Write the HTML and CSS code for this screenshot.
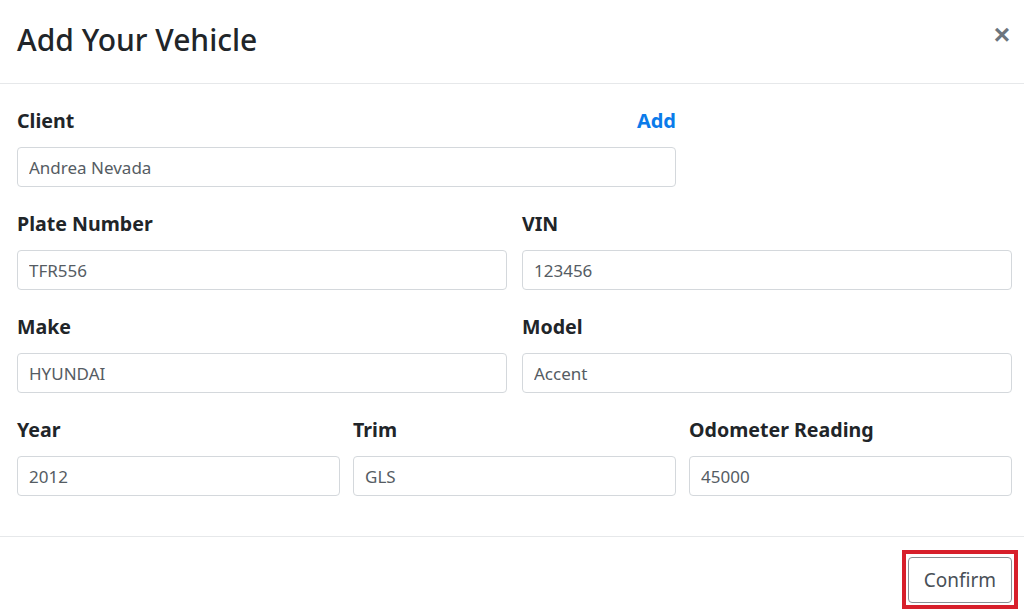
FILE: index.html
```html
<!DOCTYPE html>
<html>
<head>
    <title>Add Your Vehicle</title>
    <link rel="stylesheet" href="styles.css">
</head>
<body>
    <div class="modal">
        <div class="modal-header">
            <h1 class="modal-title">Add Your Vehicle</h1>
            <button class="close" type="button">&times;</button>
        </div>
        <form class="modal-body">
            <div class="row cols-3">
                <div class="field span-2">
                    <div class="label-line">
                        <label>Client</label>
                        <a class="add-link" href="#">Add</a>
                    </div>
                    <input type="text" value="Andrea Nevada">
                </div>
            </div>
            <div class="row cols-2">
                <div class="field">
                    <label>Plate Number</label>
                    <input type="text" value="TFR556">
                </div>
                <div class="field">
                    <label>VIN</label>
                    <input type="text" value="123456">
                </div>
            </div>
            <div class="row cols-2">
                <div class="field">
                    <label>Make</label>
                    <input type="text" value="HYUNDAI">
                </div>
                <div class="field">
                    <label>Model</label>
                    <input type="text" value="Accent">
                </div>
            </div>
            <div class="row cols-3">
                <div class="field">
                    <label>Year</label>
                    <input type="text" value="2012">
                </div>
                <div class="field">
                    <label>Trim</label>
                    <input type="text" value="GLS">
                </div>
                <div class="field">
                    <label>Odometer Reading</label>
                    <input type="text" value="45000">
                </div>
            </div>
        </form>
        <div class="modal-footer">
            <span class="highlight">
                <button class="btn-confirm" type="button">Confirm</button>
            </span>
        </div>
    </div>
</body>
</html>
```

FILE: styles.css
```css
body {
    margin: 0;
    font-family: "Noto Sans", "Open Sans", sans-serif;
    color: #212529;
    background: #fff;
}

.modal {
    width: 1024px;
}

.modal-header {
    display: flex;
    justify-content: space-between;
    align-items: center;
    height: 84px;
    padding: 0 14px 0 17px;
    border-bottom: 1px solid #e6e8ea;
    box-sizing: border-box;
}

.modal-title {
    margin: 0 0 4px 0;
    font-size: 30px;
    font-weight: 500;
    color: #212529;
}

.close {
    margin-top: -14px;
    background: none;
    border: none;
    font-family: "Liberation Sans", sans-serif;
    font-size: 28px;
    font-weight: bold;
    color: #6c757d;
    padding: 0;
    cursor: pointer;
}

.modal-body {
    padding: 25px 12px 15px 17px;
}

.row {
    display: grid;
    margin-bottom: 25px;
}

.cols-2 {
    grid-template-columns: 1fr 1fr;
    column-gap: 15px;
}

.cols-3 {
    grid-template-columns: 1fr 1fr 1fr;
    column-gap: 13px;
}

.span-2 {
    grid-column: span 2;
}

.label-line {
    display: flex;
    justify-content: space-between;
}

label {
    display: block;
    font-size: 19.6px;
    font-weight: bold;
    line-height: 24px;
    margin-bottom: 14px;
}

.add-link {
    font-size: 20px;
    font-weight: bold;
    line-height: 24px;
    color: #0b7bea;
    text-decoration: none;
}

input[type="text"] {
    display: block;
    width: 100%;
    height: 40px;
    box-sizing: border-box;
    padding: 0 11px;
    border: 1px solid #d4d8dc;
    border-radius: 4px;
    font-family: inherit;
    font-size: 17px;
    color: #555c63;
}

.modal-footer {
    display: flex;
    justify-content: flex-end;
    border-top: 1px solid #e6e8ea;
    padding: 13px 6px 0 0;
}

.highlight {
    display: block;
    border: 4px solid #d71f2b;
    padding: 3px 2px 2px 2px;
}

.btn-confirm {
    display: block;
    height: 46px;
    padding: 0 15px;
    background: #fff;
    border: 1px solid #8a9096;
    border-radius: 4px;
    font-family: inherit;
    font-size: 19px;
    color: #495057;
    cursor: pointer;
}
```
